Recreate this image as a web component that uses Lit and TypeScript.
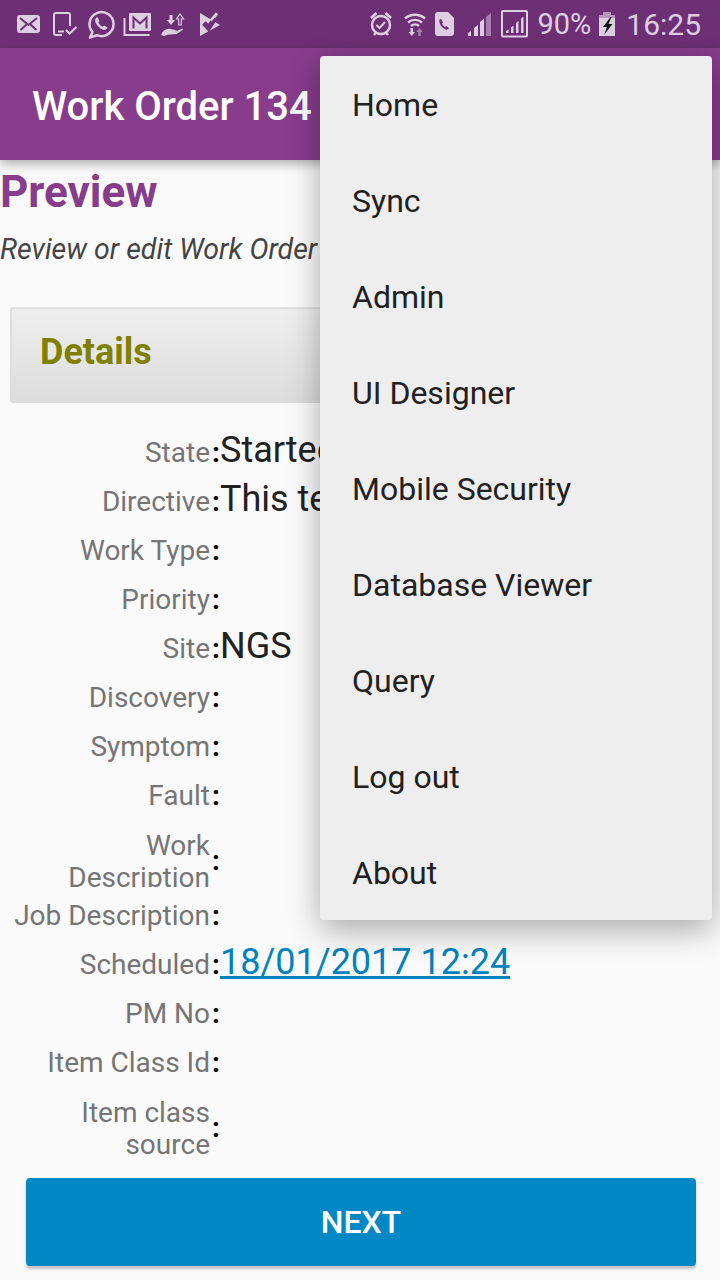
import { LitElement, css, html, svg } from 'lit';
import { customElement } from 'lit/decorators.js';

const FIELDS = [
    { label: 'State', value: 'Started' },
    { label: 'Directive', value: 'This test' },
    { label: 'Work Type' },
    { label: 'Priority' },
    { label: 'Site', value: 'NGS' },
    { label: 'Discovery' },
    { label: 'Symptom' },
    { label: 'Fault' },
    { label: 'Work Description', tall: true },
    { label: 'Job Description' },
    { label: 'Scheduled', value: '18/01/2017 12:24', link: true },
    { label: 'PM No' },
    { label: 'Item Class Id' },
    { label: 'Item class source', tall: true },
];

const MENU = ['Home', 'Sync', 'Admin', 'UI Designer', 'Mobile Security', 'Database Viewer', 'Query', 'Log out', 'About'];

const LIGHT = '#dfcde3';
const DARK = '#6d3074';

// each icon uses page coordinates in its viewBox, so x/w are the slot on the status bar
const icon = (x: number, w: number, body: unknown) => html`<svg width="${w}" height="48" viewBox="${x} 0 ${w} 48" fill="none">${body}</svg>`;

const leftIcons = [
    icon(10, 36, svg`
        <rect x="17" y="15" width="23" height="18" rx="3" fill="${LIGHT}"/>
        <path d="M20 18l8.500 7 8.500-7M20.500 30l6-5.500M36.500 30l-6-5.500" stroke="${DARK}" stroke-width="2"/>`),
    icon(46, 36, svg`
        <path d="M62 35h-6a2 2 0 0 1-2-2V15a2 2 0 0 1 2-2h12a2 2 0 0 1 2 2v11" stroke="${LIGHT}" stroke-width="2"/>
        <path d="M58 31.500h6" stroke="${LIGHT}" stroke-width="2"/>
        <path d="M66 30l3.500 3.500 7-6.500" stroke="${LIGHT}" stroke-width="2"/>`),
    icon(82, 36, svg`
        <path d="M92.500 32A12 12 0 1 1 97 35.200L90 37.500z" stroke="${LIGHT}" stroke-width="2.500" stroke-linejoin="round"/>
        <path d="M96.500 17.500c-1.500 1-1.800 3-.8 5.300 1.500 3 4 5.700 7 6.700 2.300.6 4 0 4.800-2.100l-3.500-2-1.500 1.300c-2-.8-3.200-2.300-4.200-4.200l1.200-1.500-1.700-3.500z" fill="${LIGHT}"/>`),
    icon(118, 36, svg`
        <path d="M124.500 18v17h25" stroke="${LIGHT}" stroke-width="2"/>
        <rect x="129" y="13" width="22" height="18" rx="1" fill="${LIGHT}"/>
        <path d="M133.500 28.500V17.500l6.500 6 6.500-6v11" stroke="${DARK}" stroke-width="2"/>`),
    icon(154, 36, svg`
        <path d="M161 35c2-5 6-7 10-6l6 1.500-2.500 1.500 8-3.500.8 1-6.800 4.500-9 .7-3.500 1.300z" fill="${LIGHT}"/>
        <path d="M169.500 15h3v5h2.500l-4 5-4-5h2.500z" fill="${LIGHT}"/>
        <path d="M180 14l-3.500 5h2.200v6h2.600v-6h2.200z" stroke="${LIGHT}" stroke-width="1.200"/>`),
    icon(190, 36, svg`
        <path d="M200 13v23l20-11z" fill="${LIGHT}"/>
        <path d="M204 23l4.500 5 9.500-14" stroke="${DARK}" stroke-width="5"/>
        <path d="M211 20.500l6-7" stroke="${LIGHT}" stroke-width="3"/>
        <path d="M204 23l4.500 5 7-9.500" stroke="${DARK}" stroke-width="2.500"/>`),
];

const rightIcons = [
    icon(366, 34, svg`
        <circle cx="383" cy="25" r="9" stroke="${LIGHT}" stroke-width="2.500"/>
        <path d="M378.500 25l3 3 5.500-6" stroke="${LIGHT}" stroke-width="2"/>
        <path d="M373 18l5.500-5M393 18l-5.500-5M376 35l2-2.500M390 35l-2-2.500" stroke="${LIGHT}" stroke-width="2.500"/>`),
    icon(400, 32, svg`
        <path d="M407 18.500a15 15 0 0 1 20 0M410 22.500a10.500 10.500 0 0 1 14 0M413 26a6 6 0 0 1 8 0" stroke="${LIGHT}" stroke-width="2.400"/>
        <path d="M412.500 28h2.500v4h2l-3.200 4-3.300-4h2z" fill="${LIGHT}"/>
        <path d="M421.500 28l3.300 4h-2v4h-2.500v-4h-2z" fill="${LIGHT}" opacity=".5"/>`),
    icon(432, 30, svg`
        <path d="M437 15a3 3 0 0 1 3-3h10l6 6v15a3 3 0 0 1-3 3h-13a3 3 0 0 1-3-3z" fill="${LIGHT}"/>
        <path d="M442 19c-1 1-1 3 0 5 1 2.500 3 4.500 5.500 5.500 1.500.5 3 0 3.500-1.500l-2.800-2-1.200 1c-1.300-.7-2.300-1.800-3-3.200l1-1.200-1.500-3.100z" fill="${DARK}"/>`),
    icon(462, 37, svg`
        <path d="M470 36v-3l3-2v5zM476 36v-8l4-3v11zM482 36V22l4-3.500V36z" fill="${LIGHT}"/>
        <path d="M488 36V17l5-4v23z" fill="${LIGHT}" opacity=".5"/>`),
    icon(499, 35, svg`
        <rect x="504" y="11" width="25" height="25.500" rx="1" stroke="${LIGHT}" stroke-width="2"/>
        <path d="M508 33v-2l2.500-1.500V33zM513 33v-5.500l2.500-2V33zM518 33V23l2.500-2v12zM523 33V18.500l2.500-2V33z" fill="${LIGHT}"/>`),
];

const battery = icon(598, 20, svg`
    <path d="M604 12h8v3h4v21h-16V15h4z" fill="${LIGHT}"/>
    <path d="M604 12h8v3h4v3h-16v-3h4z" fill="${DARK}" opacity=".35"/>
    <path d="M611.500 17l-7.500 10h4l-3 8 8.500-11h-4l3-7z" fill="#111"/>`);

@customElement('app-root')
export class AppRoot extends LitElement {
    static styles = css`
        :host {
            display: flex;
            flex-direction: column;
            position: relative;
            height: 1280px;
            overflow: hidden;
            background: #fafafa;
            font-family: Roboto, sans-serif;
        }

        .status {
            display: flex;
            justify-content: space-between;
            height: 48px;
            padding: 0 19px 0 10px;
            flex: none;
            background: #6d3074;
            color: #dfcde3;
            font-size: 30px;
        }

        .status svg {
            display: block;
            flex: none;
        }

        .status-group {
            display: flex;
            align-items: center;
        }

        .pct {
            margin: 0 6px 0 5px;
            font-size: 29px;
        }

        .clock {
            margin-left: 9px;
        }

        .appbar {
            display: flex;
            align-items: center;
            position: relative;
            height: 112px;
            padding: 4px 32px 0;
            flex: none;
            box-sizing: border-box;
            background: #873c8c;
            box-shadow: 0 4px 10px rgba(0, 0, 0, 0.3);
            color: #fff;
            font-size: 40px;
            font-weight: 500;
            white-space: nowrap;
        }

        main {
            flex: 1;
            min-height: 0;
            overflow: hidden;
        }

        h1 {
            margin: 0;
            color: #873c8c;
            font-size: 44px;
            font-weight: 700;
            line-height: 64px;
        }

        .sub {
            height: 83px;
            color: #444;
            font-size: 28.500px;
            font-style: italic;
            line-height: 52px;
            white-space: nowrap;
        }

        .panel {
            display: flex;
            align-items: center;
            height: 96px;
            margin: 0 10px 24px;
            padding: 0 0 8px 28px;
            box-sizing: border-box;
            border-top: 2px solid #dedede;
            border-left: 2px solid #dedede;
            border-radius: 3px;
            background: linear-gradient(#efefef, #dcdcdc);
            color: #808000;
            font-size: 36px;
            font-weight: 700;
        }

        .row {
            display: grid;
            grid-template-columns: 212px 8px 1fr;
            align-items: center;
            height: 49px;
        }

        .row.tall {
            height: 71px;
        }

        .label {
            padding: 2px 2px 0 0;
            color: #757575;
            font-size: 28px;
            line-height: 32px;
            text-align: right;
        }

        .tall .label {
            align-self: start;
            height: 57px;
            margin-top: 11px;
            padding-top: 0;
            overflow: hidden;
        }

        .colon {
            padding-top: 2px;
            color: #000;
            font-size: 28px;
            font-weight: 700;
            line-height: 32px;
            text-align: center;
        }

        .tall .colon {
            padding-top: 12px;
        }

        .value {
            padding-bottom: 4px;
            color: #212121;
            font-size: 36px;
            line-height: 40px;
            white-space: nowrap;
        }

        .value:empty {
            padding: 0;
        }

        .value.link {
            color: #0082be;
            text-decoration: underline;
        }

        footer {
            flex: none;
            padding: 20px 24px 14px 26px;
        }

        .next {
            display: block;
            width: 100%;
            height: 88px;
            border: none;
            border-radius: 4px;
            background: #0088c4;
            box-shadow: 0 3px 3px rgba(0, 0, 0, 0.22);
            color: #fff;
            font-family: inherit;
            font-size: 32px;
            font-weight: 500;
        }

        .menu {
            position: absolute;
            top: 56px;
            left: 320px;
            width: 392px;
            border-radius: 4px;
            background: #eee;
            box-shadow: 0 10px 32px rgba(0, 0, 0, 0.32);
        }

        .menu div {
            height: 96px;
            padding-left: 32px;
            color: #212121;
            font-size: 32px;
            line-height: 98px;
        }
    `;

    render() {
        return html`
            <div class="status">
                <div class="status-group">${leftIcons}</div>
                <div class="status-group">
                    ${rightIcons}
                    <span class="pct">90%</span>
                    ${battery}
                    <span class="clock">16:25</span>
                </div>
            </div>
            <div class="appbar">Work Order 134</div>
            <main>
                <h1>Preview</h1>
                <div class="sub">Review or edit Work Order</div>
                <div class="panel">Details</div>
                ${FIELDS.map(f => html`
                    <div class="row ${f.tall ? 'tall' : ''}">
                        <div class="label">${f.label}</div>
                        <div class="colon">:</div>
                        <div class="value ${f.link ? 'link' : ''}">${f.value ?? ''}</div>
                    </div>
                `)}
            </main>
            <footer><button class="next">NEXT</button></footer>
            <div class="menu">${MENU.map(m => html`<div>${m}</div>`)}</div>
        `;
    }
}
